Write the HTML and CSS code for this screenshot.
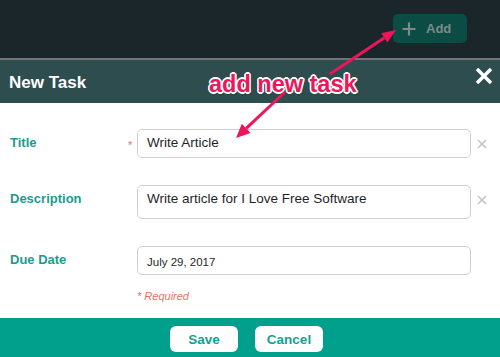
FILE: index.html
```html
<!DOCTYPE html>
<html>
<head>
<meta charset="utf-8">
<link rel="stylesheet" href="styles.css">
</head>
<body>
<div class="page">
  <div class="topbar">
    <div class="add-btn">
      <svg class="plus" width="14" height="14" viewBox="0 0 14 14"><path d="M7 0.5V13.5M0.5 7H13.5" stroke="#7d8b87" stroke-width="2.2" fill="none"/></svg>
      <span>Add</span>
    </div>
  </div>
  <div class="divider"></div>
  <div class="modal-header">
    <div class="modal-title">New Task</div>
    <svg class="close" width="18" height="18" viewBox="0 0 18 18"><path d="M2 2L16 16M16 2L2 16" stroke="#fff" stroke-width="3.4" fill="none"/></svg>
  </div>
  <div class="modal-body">
    <div class="row">
      <div class="label">Title</div>
      <div class="star">*</div>
      <div class="field">Write Article</div>
      <svg class="clear" width="10" height="10" viewBox="0 0 10 10"><path d="M1 1L9 9M9 1L1 9" stroke="#c4c4c4" stroke-width="1.6" fill="none"/></svg>
    </div>
    <div class="row">
      <div class="label">Description</div>
      <div class="star"></div>
      <div class="field tall">Write article for I Love Free Software</div>
      <svg class="clear" width="10" height="10" viewBox="0 0 10 10"><path d="M1 1L9 9M9 1L1 9" stroke="#c4c4c4" stroke-width="1.6" fill="none"/></svg>
    </div>
    <div class="row">
      <div class="label">Due Date</div>
      <div class="star"></div>
      <div class="field date">July 29, 2017</div>
      <div></div>
    </div>
    <div class="required">* Required</div>
  </div>
  <div class="modal-footer">
    <div class="btn">Save</div>
    <div class="btn">Cancel</div>
  </div>

  <svg class="arrows" width="500" height="357" viewBox="0 0 500 357">
    <line x1="330" y1="74" x2="384.4" y2="37.8" stroke="#f0145a" stroke-width="3"/>
    <polygon points="396,30 387.4,42.4 381.3,33.2" fill="#f0145a"/>
    <line x1="285" y1="92" x2="246.2" y2="128.4" stroke="#f0145a" stroke-width="3"/>
    <polygon points="236,138 250.6,133.1 241.8,123.7" fill="#f0145a"/>
  </svg>
  <div class="note">add new task</div>
</div>
</body>
</html>
```

FILE: styles.css
```css
html, body {
  margin: 0;
  padding: 0;
}
body {
  font-family: "Liberation Sans", Arial, sans-serif;
  background: #ffffff;
}
.page {
  position: relative;
  width: 500px;
  height: 357px;
  overflow: hidden;
}
.topbar {
  height: 58px;
  background: #1a262a;
  display: flex;
  justify-content: flex-end;
  align-items: flex-start;
  padding-top: 14px;
  padding-right: 33px;
  box-sizing: border-box;
}
.add-btn {
  width: 74px;
  height: 29px;
  background: #0b4c44;
  border-radius: 5px;
  display: flex;
  align-items: center;
  box-sizing: border-box;
  padding-left: 9px;
  gap: 10px;
  color: #7d8b87;
  font-weight: bold;
  font-size: 13px;
}
.divider {
  height: 2px;
  background: #6e7676;
}
.modal-header {
  height: 43px;
  background: #2e4d4e;
  display: flex;
  justify-content: space-between;
  align-items: flex-start;
  padding-left: 9px;
  padding-right: 7px;
}
.modal-title {
  color: #ffffff;
  font-weight: bold;
  font-size: 17px;
  line-height: 20px;
  margin-top: 13px;
}
.close {
  margin-top: 7px;
}
.modal-body {
  height: 215px;
  box-sizing: border-box;
  padding-top: 26px;
  display: flex;
  flex-direction: column;
  gap: 27px;
}
.row {
  display: grid;
  grid-template-columns: 118px 9px 334px 16px;
  padding-left: 10px;
  align-items: start;
}
.label {
  color: #1d9a8c;
  font-weight: bold;
  font-size: 13px;
  line-height: 15px;
  padding-top: 6px;
}
.star {
  color: #e8736a;
  font-size: 11px;
  line-height: 11px;
  padding-top: 11px;
}
.field {
  height: 29px;
  box-sizing: border-box;
  border: 1px solid #cfcfcf;
  border-radius: 5px;
  padding: 5px 0 0 9px;
  font-size: 13.5px;
  line-height: 16px;
  color: #1f1f2a;
}
.field.tall {
  height: 34px;
  padding-top: 5px;
}
.field.date {
  font-size: 11.5px;
  padding-top: 7px;
}
.clear {
  margin-left: 6px;
  margin-top: 10px;
}
.required {
  margin-top: -12px;
  padding-left: 137px;
  color: #e8705f;
  font-style: italic;
  font-size: 11px;
  line-height: 13px;
}
.modal-footer {
  height: 39px;
  background: #00a08c;
  display: flex;
  justify-content: center;
  align-items: flex-start;
  gap: 17px;
  padding-top: 8px;
  padding-right: 7px;
  box-sizing: border-box;
}
.btn {
  width: 68px;
  height: 26px;
  background: #ffffff;
  border-radius: 6px;
  color: #17a090;
  font-weight: bold;
  font-size: 13.5px;
  display: flex;
  align-items: center;
  justify-content: center;
}
.arrows {
  position: absolute;
  left: 0;
  top: 0;
  pointer-events: none;
}
.note {
  position: absolute;
  left: 209px;
  top: 72px;
  font-size: 23.5px;
  line-height: 24px;
  font-weight: bold;
  color: #f0145a;
  text-shadow:
    1.6px 0 0 #fff, -1.6px 0 0 #fff, 0 1.6px 0 #fff, 0 -1.6px 0 #fff,
    1.2px 1.2px 0 #fff, -1.2px 1.2px 0 #fff, 1.2px -1.2px 0 #fff, -1.2px -1.2px 0 #fff,
    1px 2px 2px rgba(0,0,0,0.35);
}
```
